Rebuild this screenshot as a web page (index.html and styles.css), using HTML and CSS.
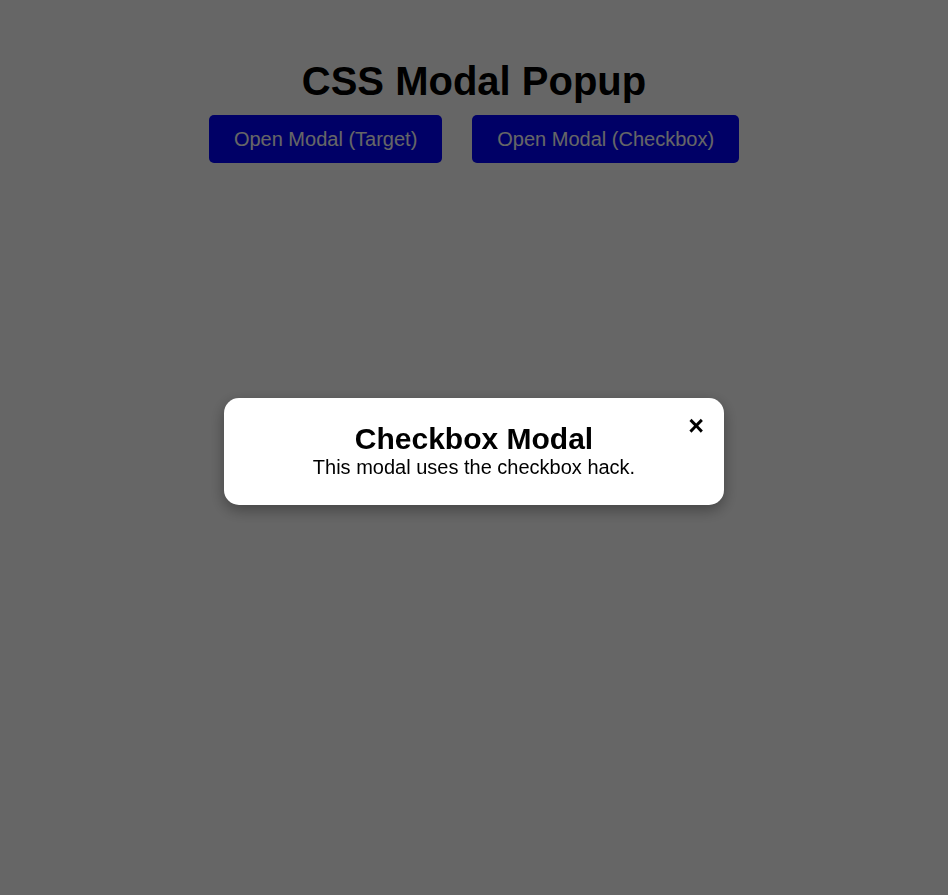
FILE: index.html
```html
<!DOCTYPE html>
<html lang="en">
<head>
<meta charset="utf-8">
<title>CSS Modal Popup</title>
<link rel="stylesheet" href="styles.css">
</head>
<body>
  <main class="page">
    <h1 class="title">CSS Modal Popup</h1>
    <div class="actions">
      <a class="btn" href="#target-modal">Open Modal (Target)</a>
      <label class="btn" for="modal-toggle">Open Modal (Checkbox)</label>
    </div>
  </main>

  <input type="checkbox" id="modal-toggle" class="modal-toggle" checked>
  <div class="overlay">
    <div class="modal" role="dialog" aria-labelledby="modal-title">
      <label class="close" for="modal-toggle" aria-label="Close">&times;</label>
      <h2 class="modal-title" id="modal-title">Checkbox Modal</h2>
      <p class="modal-text">This modal uses the checkbox hack.</p>
    </div>
  </div>
</body>
</html>
```
FILE: styles.css
```css
* { box-sizing: border-box; }

html, body {
  margin: 0;
  height: 100%;
}

body {
  background: #ffffff;
  font-family: "Liberation Sans", Arial, sans-serif;
  color: #000;
}

.page {
  display: flex;
  flex-direction: column;
  align-items: center;
}

.title {
  font-size: 40px;
  line-height: 46px;
  font-weight: bold;
  margin: 58px 0 11px;
}

.actions {
  display: flex;
  justify-content: center;
  gap: 30px;
}

.btn {
  display: block;
  background: #0000ff;
  color: #ffffff;
  font-size: 20px;
  line-height: 24px;
  padding: 12px 25px;
  border-radius: 5px;
  text-decoration: none;
  cursor: pointer;
}

.modal-toggle {
  display: none;
}

.overlay {
  position: fixed;
  inset: 0;
  background: rgba(0, 0, 0, 0.6);
  display: none;
  align-items: center;
  justify-content: center;
  padding-top: 8px;
}

.modal-toggle:checked + .overlay {
  display: flex;
}

.modal {
  position: relative;
  width: 500px;
  background: #ffffff;
  border-radius: 15px;
  padding: 24px 20px 26px;
  text-align: center;
  box-shadow: 0 5px 15px rgba(0, 0, 0, 0.35);
}

.modal-title {
  margin: 0;
  font-size: 30px;
  line-height: 34px;
  font-weight: bold;
}

.modal-text {
  margin: 0;
  font-size: 20px;
  line-height: 23px;
}

.close {
  position: absolute;
  top: 12px;
  right: 20px;
  font-size: 27px;
  line-height: 32px;
  font-weight: bold;
  cursor: pointer;
}
```
